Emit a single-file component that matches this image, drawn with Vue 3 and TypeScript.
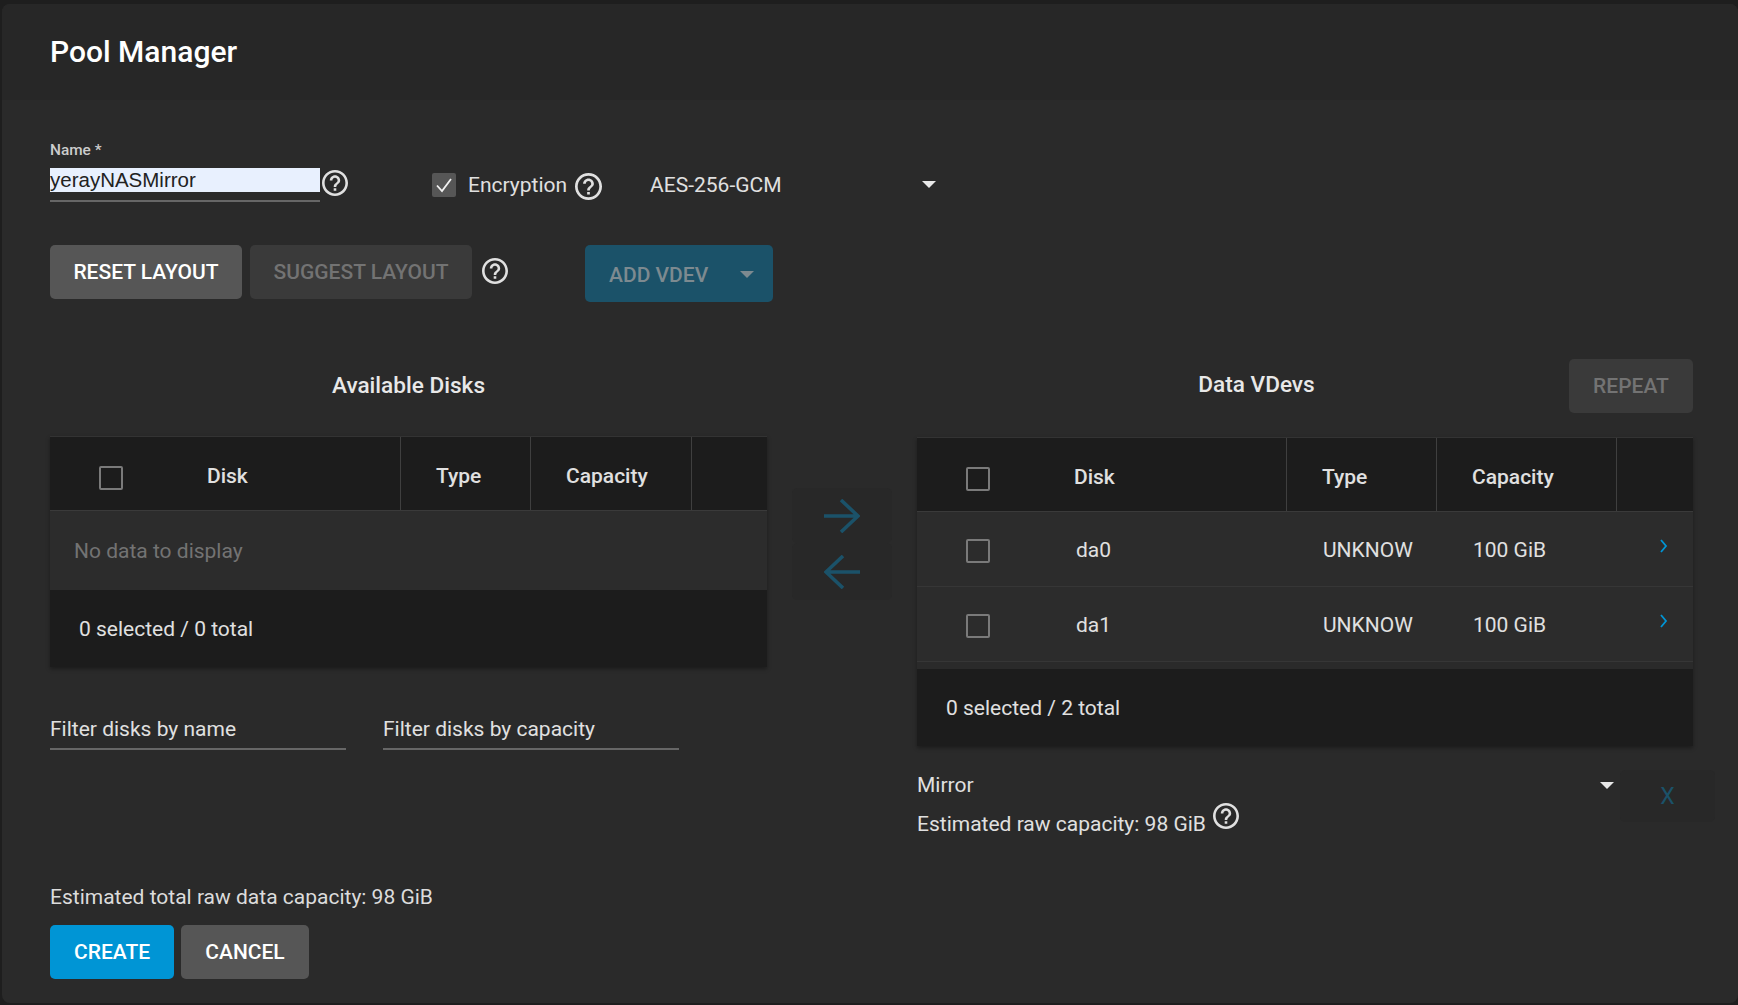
<template>
  <div class="page">
    <div class="card">
      <div class="card-head">
        <h1>Pool Manager</h1>
      </div>

      <div class="card-body">
        <!-- Name / encryption -->
        <div class="form-row">
          <div class="name-field">
            <label>Name *</label>
            <input class="name-input" type="text" value="yerayNASMirror" />
          </div>
          <svg class="help name-help" viewBox="2 2 20 20"><path :d="helpPath" /></svg>
          <div class="encryption">
            <span class="enc-check">
              <svg viewBox="0 0 24 24"><path d="M5 12.5l5 5.5 9-12" /></svg>
            </span>
            <span class="enc-label">Encryption</span>
            <svg class="help" viewBox="2 2 20 20"><path :d="helpPath" /></svg>
            <div class="enc-select">
              <span>AES-256-GCM</span>
              <i class="caret"></i>
            </div>
          </div>
        </div>

        <!-- Layout buttons -->
        <div class="button-row">
          <button class="btn btn-grey reset">RESET LAYOUT</button>
          <button class="btn btn-off suggest">SUGGEST LAYOUT</button>
          <svg class="help suggest-help" viewBox="2 2 20 20"><path :d="helpPath" /></svg>
          <button class="btn add-vdev">
            <span>ADD VDEV</span>
            <i class="caret dim"></i>
          </button>
        </div>

        <div class="panes">
          <!-- Available disks -->
          <section class="pane-left">
            <div class="pane-title">
              <h2>Available Disks</h2>
            </div>
            <div class="table table-left">
              <div class="thead cols">
                <div class="cell first">
                  <span class="check"></span>
                  <span class="disk-head">Disk</span>
                </div>
                <div class="cell">Type</div>
                <div class="cell">Capacity</div>
                <div class="cell last"></div>
              </div>
              <div class="empty">No data to display</div>
              <div class="tfoot">0 selected / 0 total</div>
            </div>
            <div class="filters">
              <div class="filter">Filter disks by name</div>
              <div class="filter">Filter disks by capacity</div>
            </div>
          </section>

          <!-- Move arrows -->
          <div class="arrows">
            <button class="arrow-btn">
              <svg viewBox="0 0 36 34"><path d="M0 17h34M17 1l17 16-17 16" /></svg>
            </button>
            <button class="arrow-btn">
              <svg viewBox="0 0 36 34"><path d="M36 17H2M19 1L2 17l17 16" /></svg>
            </button>
          </div>

          <!-- Data vdevs -->
          <section class="pane-right">
            <div class="pane-title vdev-title">
              <h2>Data VDevs</h2>
              <button class="btn btn-off repeat">REPEAT</button>
            </div>
            <div class="table table-right">
              <div class="thead cols">
                <div class="cell first">
                  <span class="check"></span>
                  <span class="disk-head">Disk</span>
                </div>
                <div class="cell">Type</div>
                <div class="cell">Capacity</div>
                <div class="cell last"></div>
              </div>
              <div class="rows">
                <div v-for="disk in disks" :key="disk.name" class="trow cols">
                  <div class="cell first">
                    <span class="check"></span>
                    <span class="disk-name">{{ disk.name }}</span>
                  </div>
                  <div class="cell">{{ disk.type }}</div>
                  <div class="cell">{{ disk.capacity }}</div>
                  <div class="cell last">
                    <svg class="chevron" viewBox="0 0 8 14"><path d="M1 1l5 6-5 6" /></svg>
                  </div>
                </div>
              </div>
              <div class="tfoot">0 selected / {{ disks.length }} total</div>
            </div>
            <div class="vdev-options">
              <div class="vdev-info">
                <div class="vdev-select">
                  <span>Mirror</span>
                  <i class="caret"></i>
                </div>
                <div class="raw">
                  <span>Estimated raw capacity: 98 GiB</span>
                  <svg class="help" viewBox="2 2 20 20"><path :d="helpPath" /></svg>
                </div>
              </div>
              <button class="remove">X</button>
            </div>
          </section>
        </div>

        <div class="total">Estimated total raw data capacity: 98 GiB</div>
        <div class="actions">
          <button class="btn btn-blue">CREATE</button>
          <button class="btn btn-grey cancel">CANCEL</button>
        </div>
      </div>
    </div>
  </div>
</template>

<script setup lang="ts">
interface Disk {
  name: string
  type: string
  capacity: string
}

const disks: Disk[] = [
  { name: 'da0', type: 'UNKNOW', capacity: '100 GiB' },
  { name: 'da1', type: 'UNKNOW', capacity: '100 GiB' }
]

// material help_outline
const helpPath =
  'M11 18h2v-2h-2v2zm1-16C6.48 2 2 6.48 2 12s4.48 10 10 10 10-4.48 10-10S17.52 2 12 2zm0 18c-4.41 0-8-3.59-8-8s3.59-8 8-8 8 3.59 8 8-3.59 8-8 8zm0-14c-2.21 0-4 1.79-4 4h2c0-1.1.9-2 2-2s2 .9 2 2c0 2-3 1.75-3 5h2c0-2.25 3-2.5 3-5 0-2.21-1.79-4-4-4z'
</script>

<style>
html,
body {
  margin: 0;
  background: #1e1e1e;
}
</style>

<style scoped>
.page {
  box-sizing: border-box;
  height: 1005px;
  padding: 4px 0 2px 2px;
  background: #1e1e1e;
  overflow: hidden;
  font-family: Roboto, 'Liberation Sans', sans-serif;
  font-size: 21px;
  line-height: 24px;
  color: #e0e0e0;
}

.card {
  display: flex;
  flex-direction: column;
  height: 100%;
  background: #2a2a2a;
  border-radius: 8px;
  overflow: hidden;
}

.card-head {
  display: flex;
  align-items: center;
  flex: none;
  height: 96px;
  padding-left: 48px;
  background: #272727;
}

.card-head h1 {
  margin: 0;
  font-size: 30px;
  font-weight: 500;
  color: #fff;
}

.card-body {
  display: flex;
  flex-direction: column;
  flex: 1;
  padding: 41px 0 24px 48px;
}

.form-row {
  display: flex;
  align-items: flex-start;
  height: 64px;
  margin-bottom: 40px;
}

.name-field {
  display: flex;
  flex-direction: column;
  width: 270px;
  padding-bottom: 8px;
  border-bottom: 2px solid #666;
}

.name-field label {
  margin-bottom: 10px;
  padding-top: 1px;
  font-size: 15.4px;
  font-weight: 500;
  line-height: 16px;
  color: #ccc;
}

.name-input {
  box-sizing: border-box;
  width: 100%;
  height: 24px;
  padding: 0;
  border: 0;
  outline: 0;
  background: #e8f0fe;
  font-family: 'Liberation Sans', Arial, sans-serif;
  font-size: 20.5px;
  color: #222;
}

.help {
  flex: none;
  width: 26px;
  height: 26px;
  fill: #e0e0e0;
}

.name-help {
  margin: 29px 0 0 2px;
}

.encryption {
  display: flex;
  align-items: center;
  height: 27px;
  margin: 30px 0 0 84px;
}

.enc-check {
  display: flex;
  width: 24px;
  height: 24px;
  border-radius: 2px;
  background: #565656;
}

.enc-check svg {
  width: 24px;
  height: 24px;
  fill: none;
  stroke: #f0f0f0;
  stroke-width: 1.8;
}

.enc-label {
  margin: 0 8px 0 12px;
}

.encryption .help {
  width: 27px;
  height: 27px;
  margin: 3px 0 0;
}

.enc-select {
  display: flex;
  align-items: center;
  justify-content: space-between;
  width: 286px;
  margin-left: 48px;
}

.caret {
  width: 0;
  height: 0;
  border-left: 7px solid transparent;
  border-right: 7px solid transparent;
  border-top: 7px solid #e8e8e8;
}

.caret.dim {
  border-top-color: #7d8a90;
}

.button-row {
  display: flex;
  align-items: flex-start;
  height: 57px;
  margin-bottom: 57px;
}

.btn {
  height: 54px;
  padding: 0;
  border: 0;
  border-radius: 5px;
  font-family: inherit;
  font-size: 21px;
  font-weight: 500;
  color: #fff;
}

.btn-grey {
  background: #565656;
}

.btn-off {
  background: #3a3a3a;
  color: #737373;
}

.btn-blue {
  width: 124px;
  background: #0095d5;
}

.reset {
  width: 192px;
}

.suggest {
  width: 222px;
  margin-left: 8px;
}

.suggest-help {
  margin: 13px 0 0 10px;
}

.add-vdev {
  display: flex;
  align-items: center;
  justify-content: space-between;
  width: 188px;
  height: 57px;
  margin-left: 77px;
  padding: 2px 19px 0 24px;
  background: #1b5269;
  color: #7d8a90;
}

.panes {
  display: flex;
  align-items: flex-start;
  flex: 1;
}

.pane-left {
  flex: none;
  width: 717px;
}

.pane-right {
  flex: none;
  width: 776px;
}

.pane-title {
  display: flex;
  align-items: center;
  justify-content: center;
  height: 54px;
  margin-bottom: 23px;
}

.pane-title h2 {
  margin: 0;
  font-size: 22.6px;
  font-weight: 500;
  color: #e8e8e8;
}

.vdev-title {
  position: relative;
  height: 52px;
  margin-bottom: 26px;
  padding-right: 97px;
}

.repeat {
  position: absolute;
  top: 0;
  right: 0;
  width: 124px;
}

.table {
  background: #1c1c1c;
  box-shadow: 0 2px 4px rgba(0, 0, 0, 0.35);
}

.cols {
  display: grid;
}

.table-left .cols {
  grid-template-columns: 351px 130px 161px 75px;
}

.table-right .cols {
  grid-template-columns: 370px 150px 180px 76px;
}

.thead {
  box-sizing: border-box;
  height: 75px;
  border-top: 1px solid #333;
  border-bottom: 1px solid #3a3a3a;
  font-weight: 500;
}

.thead .cell {
  padding-top: 5px;
  border-right: 1px solid #3f3f3f;
}

.thead .cell.last {
  border-right: 0;
}

.cell {
  display: flex;
  align-items: center;
  box-sizing: border-box;
  padding-left: 35px;
}

.cell.first {
  padding-left: 49px;
}

.cell.last {
  padding-left: 43px;
}

.check {
  flex: none;
  box-sizing: border-box;
  width: 24px;
  height: 24px;
  margin-top: 4px;
  border: 2.5px solid #7a7a7a;
  border-radius: 2px;
}

.disk-head {
  margin-left: 84px;
}

.disk-name {
  margin-left: 86px;
}

.rows {
  padding-bottom: 7px;
  background: #2a2a2a;
}

.trow {
  box-sizing: border-box;
  height: 75px;
  border-bottom: 1px solid #363636;
  background: #2c2c2c;
}

.trow .cell {
  padding-top: 1px;
  padding-left: 36px;
}

.trow .cell.first {
  padding-left: 49px;
}

.trow .cell.last {
  padding-left: 43px;
}

.trow .check {
  margin-top: 2px;
}

.chevron {
  width: 8px;
  height: 14px;
  margin-top: -8px;
  fill: none;
  stroke: #0095d5;
  stroke-width: 1.8;
}

.empty {
  display: flex;
  align-items: center;
  height: 79px;
  padding-left: 24px;
  background: #2c2c2c;
  color: #737373;
}

.tfoot {
  display: flex;
  align-items: center;
  height: 77px;
  padding-left: 29px;
}

.filters {
  display: flex;
  gap: 37px;
  margin-top: 50px;
}

.filter {
  width: 296px;
  padding-bottom: 7px;
  border-bottom: 2px solid #666;
}

.arrows {
  display: flex;
  flex-direction: column;
  flex: none;
  width: 100px;
  margin: 129px 25px 0;
}

.arrow-btn {
  display: flex;
  align-items: center;
  justify-content: center;
  height: 55px;
  padding: 0;
  border: 0;
  border-radius: 5px;
  background: #282828;
}

.arrow-btn + .arrow-btn {
  height: 57px;
}

.arrow-btn svg {
  width: 36px;
  height: 34px;
  fill: none;
  stroke: #1b5269;
  stroke-width: 3.6;
}

.vdev-options {
  display: flex;
  align-items: flex-start;
  margin: 24px -23px 0 0;
}

.vdev-info {
  flex: none;
  width: 697px;
  padding-top: 3px;
}

.vdev-select {
  display: flex;
  align-items: center;
  justify-content: space-between;
}

.raw {
  display: flex;
  margin-top: 15px;
}

.raw .help {
  margin: -9px 0 0 7px;
}

.remove {
  width: 95px;
  height: 52px;
  margin-left: 6px;
  border: 0;
  border-radius: 5px;
  background: #282828;
  font-family: inherit;
  font-size: 23px;
  color: #1b5269;
}

.total {
  flex: none;
  color: #dcdcdc;
}

.actions {
  display: flex;
  flex: none;
  gap: 7px;
  margin-top: 16px;
}

.cancel {
  width: 128px;
}
</style>
